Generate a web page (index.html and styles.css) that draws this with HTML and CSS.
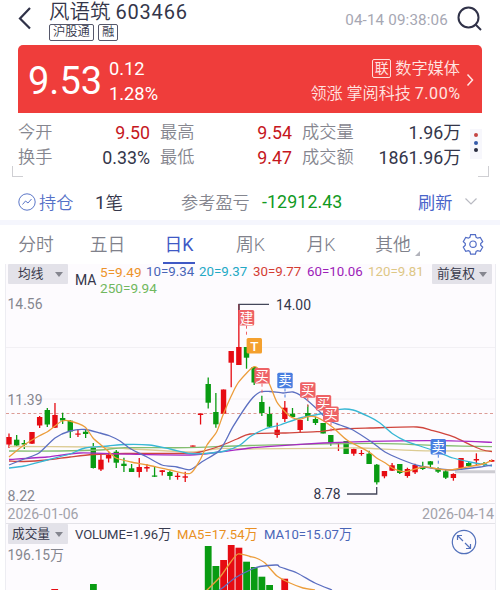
FILE: index.html
```html
<!DOCTYPE html>
<html lang="zh-CN">
<head>
<meta charset="utf-8">
<title>风语筑 603466</title>
<link rel="stylesheet" href="styles.css">
</head>
<body>
<header class="header">
  <svg class="back" width="14" height="24" viewBox="0 0 14 24"><path d="M12 2 2 12.500 12 22.500"/></svg>
  <div class="title">
    <div class="name"><span>风语筑</span><span class="code">603466</span></div>
    <div class="tags"><span class="tag">沪股通</span><span class="tag">融</span></div>
  </div>
  <time class="time">04-14 09:38:06</time>
  <svg class="search" width="26" height="26" viewBox="0 0 26 26"><circle cx="11.500" cy="11.500" r="10"/><path d="m18.500 18.500 5.500 5.500"/></svg>
</header>
<section class="quote">
  <div class="price">9.53</div>
  <div class="change"><span>0.12</span><span>1.28%</span></div>
  <div class="sector">
    <div class="sector-name"><span class="link-tag">联</span><span>数字媒体</span></div>
    <div>领涨 掌阅科技 <span class="pct">7.00%</span></div>
  </div>
  <svg class="chev" width="8" height="14" viewBox="0 0 8 14"><path d="m1.500 1.500 5 5.500-5 5.500"/></svg>
</section>
<section class="stats">
  <span>今开</span><b class="up">9.50</b><span>最高</span><b class="up">9.54</b><span>成交量</span><b>1.96万</b>
  <span>换手</span><b>0.33%</b><span>最低</span><b class="up">9.47</b><span>成交额</span><b>1861.96万</b>
  <i class="corner left"></i><i class="corner right"></i>
  <div class="dots"><i></i><i></i><i></i></div>
</section>
<section class="position">
  <svg class="hold-icon" width="18" height="18" viewBox="0 0 18 18"><circle cx="9" cy="9" r="8.200"/><path d="m4.500 11.500 3-3.500 2.500 2 3.500-4"/></svg>
  <span class="hold">持仓</span><span class="count"><em>1</em>笔</span><span class="pl-label">参考盈亏</span><span class="pl">-12912.43</span><span class="refresh">刷新</span>
  <svg class="down" width="14" height="9" viewBox="0 0 14 9"><path d="m1.500 1.500 5.500 5.500 5.500-5.500"/></svg>
</section>
<nav class="tabs">
  <span>分时</span><span>五日</span><span class="active">日K</span><span>周K</span><span>月K</span><span class="more">其他</span>
  <svg class="gear" width="22" height="22" viewBox="0 0 22 22"><path d="M8.600 1.600h4.800l.7 2.700 1.500.9 2.700-.8 2.400 4.200-2 1.900v1.800l2 1.900-2.400 4.200-2.700-.8-1.500.9-.7 2.700H8.600l-.7-2.700-1.500-.9-2.700.8-2.400-4.200 2-1.900v-1.800l-2-1.900 2.400-4.200 2.700.8 1.500-.9z"/><circle cx="11" cy="11.200" r="3.200"/></svg>
</nav>
<main class="panel">
  <div class="ma-bar">
    <span class="chip avg">均线<i></i></span>
    <span class="ma-label">MA</span>
    <div class="legend"><span class="m5">5=9.49</span><span class="m10">10=9.34</span><span class="m20">20=9.37</span><span class="m30">30=9.77</span><span class="m60">60=10.06</span><span class="m120">120=9.81</span><span class="m250">250=9.94</span></div>
    <span class="chip adjust">前复权<i></i></span>
  </div>
  <svg id="kline" class="chart" width="500" height="229" viewBox="0 295 500 229"></svg>
  <div class="vol-bar">
    <span class="chip vol">成交量<i></i></span>
    <span class="v1">VOLUME=1.96万</span><span class="v2">MA5=17.54万</span><span class="v3">MA10=15.07万</span>
    <svg class="expand" width="26" height="26" viewBox="0 0 26 26"><circle cx="13" cy="13" r="11.700"/><path d="m7 7 5 5m2 2 5.500 5.500M6.500 11V6.500H11M15 19.500h4.500V15"/></svg>
  </div>
  <svg id="volume" class="chart" width="500" height="46" viewBox="0 544 500 46"></svg>
</main>
<script src="chart.js"></script>
</body>
</html>
```
FILE: styles.css
```css
* { box-sizing: border-box; }
body { margin: 0; width: 500px; height: 590px; overflow: hidden; background: #fff; color: #34364a; font-family: Roboto, "Noto Sans CJK SC", sans-serif; font-weight: 400; }
svg { display: block; flex: none; fill: none; }
span, b, time { white-space: nowrap; }
i, em { font-style: normal; }

.header { height: 45px; display: flex; padding-left: 18px; }
.back { margin-top: 6px; stroke: #303248; stroke-width: 2.2; }
.title { margin-left: 17px; width: 240px; }
.name { display: flex; gap: 5px; height: 24px; line-height: 25px; font-size: 20.500px; font-weight: 350; }
.code { font-weight: 400; font-size: 20px; letter-spacing: .8px; line-height: 24px; }
.tags { display: flex; gap: 4px; }
.tag { height: 17px; border: 1px solid #55576a; border-radius: 2px; padding: 0 3px; font-size: 12.3px; line-height: 15px; font-weight: 350; }
.time { width: 159px; text-align: right; font-size: 15.2px; line-height: 40px; color: #a6a7b3; letter-spacing: .15px; }
.search { margin: 6px 0 0 9px; stroke: #303248; stroke-width: 2; }

.quote { height: 68px; margin: 0 18px; background: #ef3d3b; border-radius: 5px 5px 0 0; display: flex; color: #fff; padding-left: 10px; }
.price { width: 81px; font-size: 38px; line-height: 73px; }
.change { width: 80px; display: flex; flex-direction: column; padding-top: 11px; font-size: 18.3px; line-height: 25px; }
.sector { width: 271px; padding-top: 11px; font-size: 16.1px; line-height: 25px; text-align: right; color: #ffe4e1; font-weight: 350; }
.sector-name { display: flex; justify-content: flex-end; align-items: center; gap: 4px; height: 25px; font-size: 16.2px; }
.link-tag { width: 19px; height: 19px; border: 1px solid #ffdedb; border-radius: 2px; font-size: 14px; line-height: 16px; text-align: center; font-weight: 400; }
.pct { font-weight: 400; letter-spacing: .5px; margin-right: -.5px; }
.chev { margin: 28px 0 0 6px; stroke: #ffe6e4; stroke-width: 1.5; }

.stats { position: relative; height: 70px; padding: 7px 0 0 18px; display: grid; grid-template-columns: 42px 90px 52px 90px 61px 108px; grid-template-rows: 25px 25px; grid-auto-rows: 0; align-items: center; font-size: 17.2px; line-height: 25px; color: #85868f; font-weight: 350; }
.stats > span:nth-of-type(3n+2) { padding-left: 10px; }
.stats > span:nth-of-type(3n) { padding-left: 10px; }
.stats b { text-align: right; font-weight: 400; font-size: 17.8px; color: #34364a; }
.stats .up { color: #c51620; }
.corner { position: absolute; top: 53px; width: 11px; height: 11px; border-bottom: 1px solid #cfcfd3; }
.left { left: 12px; border-left: 1px solid #cfcfd3; }
.right { left: 478px; border-right: 1px solid #cfcfd3; }
.dots { position: absolute; left: 470px; top: 16px; width: 12px; height: 30px; padding-top: 4px; background: #f7f7fc; display: flex; flex-direction: column; align-items: center; gap: 3.500px; }
.dots i { width: 4px; height: 4px; border-radius: 2px; background: #c44544; }
.dots i:nth-child(2) { background: #345aa9; }
.dots i:nth-child(3) { background: #292c3f; }

.position { height: 37px; display: flex; align-items: center; padding-left: 18px; font-size: 17.2px; font-weight: 350; }
.hold-icon { stroke: #5c77c8; stroke-width: 1; }
.hold { margin-left: 3px; width: 56px; color: #5571c7; }
.count { width: 86px; font-size: 17.500px; }
.count em { font-weight: 400; font-size: 18.500px; }
.pl-label { width: 81px; color: #85868f; }
.pl { width: 156px; color: #119a22; font-weight: 400; font-size: 17.800px; letter-spacing: .1px; }
.refresh { width: 46px; color: #4964ca; font-weight: 400; }
.down { stroke: #b9bac2; stroke-width: 1.2; }

.tabs { height: 44px; border-top: 5px solid #f5f6fd; display: grid; grid-template-columns: 72px 71px 72px 71px 70px 106px 22px; color: #80818b; font-size: 17.800px; font-weight: 350; line-height: 39px; }
.tabs span { justify-self: center; height: 39px; }
.tabs .active { color: #4059c5; font-weight: 400; border-bottom: 2px solid #4059c5; padding: 0 2px; }
.tabs .more { margin-right: 32px; position: relative; }
.more::after { content: ""; position: absolute; right: -9px; bottom: 8px; border-left: 5px solid transparent; border-bottom: 5px solid #b2b3bb; }
.gear { margin-top: 8px; stroke: #526dc6; stroke-width: 1.2; }

.panel { background: linear-gradient(90deg, #fff 5px, #ededf2 5px, #ededf2 6px, #fdfbfe 6px, #fdfbfe 495px, #ededf2 495px, #ededf2 496px, #fff 496px); height: 326px; }
.ma-bar { height: 31px; display: flex; padding-left: 8px; }
.chip { flex: none; height: 20px; background: #e3e2e9; border-radius: 1px; display: flex; align-items: center; justify-content: space-between; font-size: 12.700px; color: #383a4c; padding-right: 5px; line-height: 20px; }
.chip i { border: 4.500px solid transparent; border-top: 5px solid #85868f; border-bottom: 0; }
.avg { width: 60px; padding-left: 10px; }
.ma-label { font-size: 14px; line-height: 32px; width: 24px; margin-left: 7px; }
.legend { width: 333px; height: 31px; display: grid; grid-template-columns: 47px 53px 54px 54px 61px 64px; grid-template-rows: 16px 15px; padding-left: 1px; font-size: 13.600px; line-height: 16px; }
.m5 { color: #ed932b; } .m10 { color: #4965b7; } .m20 { color: #22a9c4; } .m30 { color: #d43c32; } .m60 { color: #9c20b8; } .m120 { color: #ddc786; } .m250 { color: #71b85e; }
.legend span:not(.m5):not(.m250) { margin-left: -1px; font-size: 13.300px; }
.adjust { width: 60px; padding-left: 5px; }
.vol-bar { height: 20px; padding-left: 8px; display: flex; position: relative; font-size: 13.100px; line-height: 21px; }
.vol { width: 60px; padding-left: 4px; }
.v1 { margin-left: 7px; width: 102px; color: #383b50; letter-spacing: -.1px; }
.v2 { width: 87px; color: #e99022; }
.v3 { color: #4965b7; }
.expand { position: absolute; left: 451px; top: 5px; stroke: #5270bb; stroke-width: 1.2; }
.axis { fill: #85868f; font-size: 14px; }
.date { fill: #a2a2aa; font-size: 14px; }
.peak { fill: #34364a; font-size: 14px; }
.mark { fill: #fff; font-size: 13.500px; text-anchor: middle; font-weight: 400; }
.mark.t { font-weight: 500; }
```
FILE: chart.js
```js
const R = '#e60b12', G = '#099b12';

// Each candle: high, body top, body bottom, low, colour.
const candles = [
  [433.5,437,444.5,448,R],[435,439.7,445.5,446,G],[440,443,444.5,449,G],[432,432,443.7,444,R],[416,417,425.5,428,R],
  [408,410,424.5,427,G],[403,415,427.7,428,R],[412.7,418,420.5,424,G],[420,420.7,431.5,438,G],[429,433.5,434.7,437,R],
  [429,431.7,434,438,G],[443,447,468,468.5,G],[455,459.7,469.5,471,R],[452.5,455,458.5,462.5,R],[450,451.7,462.7,468,G],
  [457.7,463.7,466,472,G],[464,468.3,472,472,G],[458,467,472,477.5,R],[464,467,468.5,471.7,R],[466,475.5,476.7,477,G],
  [470,470.3,472,475.5,R],[470.7,472,476,479.7,G],[472.7,475.7,477,479.7,R],[471.7,476.3,477.7,482,R],[445.5,445.5,446.7,446.7,R],
  [413.5,413.5,415,424.5,R],[377.5,384,402.7,408.5,G],[393,412,424.3,427.7,G],[389.5,389.5,413.7,413.7,R],[351,351,362.7,387.3,R],
  [304,347,365,365,R],[347,347,357.7,368.7,G],[367,367,382.5,385,G],[395.7,402,413,416,G],[406.7,414,426.7,427.5,G],
  [422.7,429.7,435,437.7,R],[401,407.7,419,422,R],[408,413.7,417,418,G],[419.7,420,430,432,R],[405,413,417,421,G],
  [416.7,419,423,425,G],[423,423,433.5,433.5,G],[435,435,443,445.7,G],[442.5,442.5,443.5,451,R],[441,441,454,454,G],
  [448.5,449,453.7,455.7,R],[450,453,454,455.7,R],[450.7,453.7,464,464,G],[464,464.7,482.3,484.5,G],[471,471,476.3,478.3,R],
  [463,465.3,470.7,471,R],[464,464,473,474,G],[467.7,469,476,477.7,R],[463.7,465,472.3,474,R],[461.7,466.7,469,470,G],
  [461,461.3,464.7,467,G],[467.3,468.7,471.7,473,G],[469.7,471.3,477.7,479,G],[473.3,474,478,480.7,R],[458,458,468.3,469.3,R],
  [461.7,463,466,466.3,G],[453.3,459,460.5,466,R],[462,463.5,465,466,G],[459.5,460,461.7,462,R]
];

const averages = [
  ['#dccb93', [9,446.5,93,447,125,448.5,190,452,220,448.5,250,449,320,448.3,360,448,417,450.7,492,451]],
  ['#83bd70', [9,451,60,451,100,450,125,447.7,187,447.7,250,445.5,370,443.3,440,445.5,492,446.7]],
  ['#d0453d', [9,461,24,461.5,47,460,70,457,93,454.5,125,453.5,187,453.5,200,452,220,446,237,439,250,434,283,433,317,431.7,340,429,370,428,417,427,433,430.7,453,436.7,473,446,483,450,492,451.7]],
  ['#a82ac4', [9,459.5,47,457,80,453,130,454.2,190,455,220,452,250,448,267,446.7,323,443,370,441.3,440,440.7,492,442.3]],
  ['#38b7d4', [9,468,24,466,47,460,70,454,85,448,108,446,125,444.5,149,445,170,449,190,453.5,205,453.5,225,451,240,445,250,436.7,265,429,280,425,300,418,320,414,340,409.3,353,410,369,416.7,380,423,393,434,407,441.7,420,446,437,451.7,453,458,470,462,492,466]],
  ['#5c6fc1', [9,465,24,459,39,453,55,438,70,431,85,429.5,100,433,110,436,120,441,131,449,147,457,162,465,177,467,190,469.7,202,461.7,220,450,233,426.7,250,401,260,392,270,391.5,283,393,293,392,303,397,317,409,328,420,340,425,353,430,373,443,385,452,400,459,420,466,450,470,463,469,480,467,492,465]],
  ['#ec9d3b', [9,457,24,445,39,436,47,432,55,426,62,421,70,421,85,427,93,438,101,445,108,451,116,458,131,462,147,465,170,470,190,473.5,200,460,207,445,216.7,431.7,223,415,231.7,395,239,381.7,254,366.7,262,373,269,383,276.7,401.7,285,411.7,291.7,417.3,300,419.3,308,416.7,317,417.3,332,426.7,347,440,369,452,377,458.3,385,462.7,393,468.3,405,471.7,423,467,438,469,450,470,460,468.3,483,464,492,460.3]]
];

const marks = [
  ['建',246.5,317.7,'#ee6266'],['T',254.3,345.7,'#f4a02e'],['买',262,375.7,'#ee6266'],['卖',285,380.5,'#487de0'],
  ['买',307.8,390,'#ee6266'],['买',323.5,402.7,'#ee6266'],['买',331,414.3,'#ee6266'],['卖',438.3,446.7,'#487de0']
];

const line = (x1, y1, x2, y2, c, w = 1, extra = '') =>
  `<line x1="${x1}" y1="${y1}" x2="${x2}" y2="${y2}" stroke="${c}" stroke-width="${w}" ${extra}/>`;
const text = (s, x, y, cls, w) =>
  `<text x="${x}" y="${y}" class="${cls}" ${w ? `textLength="${w}" lengthAdjust="spacingAndGlyphs"` : ''}>${s}</text>`;

function curve(p, c) {
  const n = p.length / 2, X = i => p[2 * Math.max(0, Math.min(n - 1, i))], Y = i => p[2 * Math.max(0, Math.min(n - 1, i)) + 1];
  let d = `M${X(0)} ${Y(0)}`;
  for (let i = 0; i < n - 1; i++) {
    d += `C${X(i) + (X(i + 1) - X(i - 1)) / 8} ${Y(i) + (Y(i + 1) - Y(i - 1)) / 8} ${X(i + 1) - (X(i + 2) - X(i)) / 8} ${Y(i + 1) - (Y(i + 2) - Y(i)) / 8} ${X(i + 1)} ${Y(i + 1)}`;
  }
  return `<path d="${d}" stroke="${c}" stroke-width="1.3"/>`;
}

let k = line(6, 347.5, 495, 347.5, '#f2f0f4') + line(6, 399, 495, 399, '#f2f0f4')
  + line(6, 503.5, 495, 503.5, '#e4e3e8') + line(6, 523.500, 495, 523.500, '#e4e3e8')
  + line(6, 413.5, 495, 413.5, '#dc9c96', 1, 'stroke-dasharray="3 2.500"')
  + line(455, 471.7, 495, 471.7, '#cdccd2', 3);
k += text('11.39', 7.5, 404.5, 'axis', 35);
candles.forEach(([h, t, b, l, c], i) => {
  const x = 9 + i * 7.662;
  k += line(x, h, x, l, c, 1.3) + `<rect x="${x - 2.7}" y="${t}" width="5.4" height="${b - t}" fill="${c}"/>`;
});
averages.forEach(([c, p]) => { k += curve(p, c); });
k += '<path d="M239 310V304.300H269M347 494H376.700V487" stroke="#44475a" stroke-width="1.3"/>';
marks.forEach(([s, x, y, c]) => {
  if (s !== 'T') k += line(x, y + 8, x, y + 19, c, 1, 'stroke-dasharray="3 3"');
  k += `<rect x="${x - 7.7}" y="${y - 7.7}" width="15.4" height="15.4" rx="1.5" fill="${c}"/>` + text(s, x, y + 4.800, s === 'T' ? 'mark t' : 'mark');
});
k += text('14.56', 7.5, 308.7, 'axis', 35) + text('8.22', 7.5, 500.500, 'axis', 27.5)
  + text('14.00', 276, 309.5, 'peak', 35) + text('8.78', 313.500, 499, 'peak', 27)
  + text('2026-01-06', 7.5, 518.700, 'date', 71) + text('2026-04-14', 422, 518.700, 'date', 72);
document.getElementById('kline').innerHTML = k;

const bars = [[51.3,589,R],[90,584,G],[204.8,546,G],[212.5,566,G],[220.2,560,R],[227.8,545,R],[235.5,547.7,R],[243.2,561.7,G],[250.800,567,G],[258.500,576.7,G],[266.200,585,G],[281.300,578.7,R]];
document.getElementById('volume').innerHTML =
  bars.map(([x, y, c]) => `<rect x="${x}" y="${y}" width="6.800" height="${590 - y}" fill="${c}"/>`).join('')
  + curve([206,591,220,577,230,563,238,554,250,556.5,256,558,265,563,277,576,290,583,303,588,315,590], '#ec9d3b')
  + curve([218,591,225,586,235,578,250,570,260,566.5,277,565,280,567,297,573,315,583,332,590], '#5c6fc1')
  + text('196.15万', 7.5, 559.500, 'axis', 56.500);
```
